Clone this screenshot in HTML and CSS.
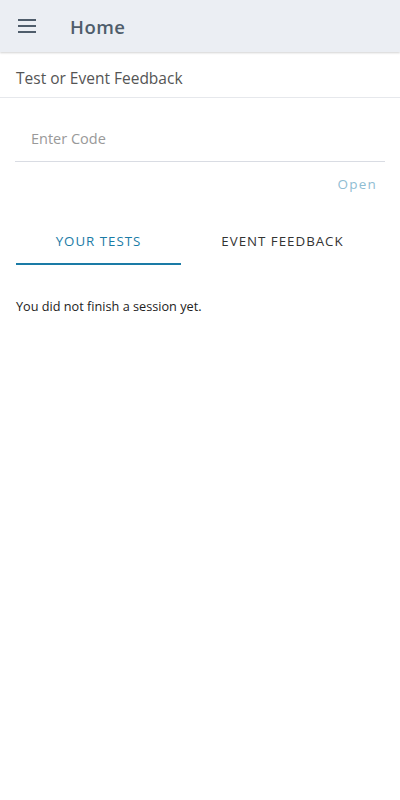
FILE: index.html
```html
<!DOCTYPE html>
<html>
<head>
  <meta charset="utf-8">
  <link rel="stylesheet" href="styles.css">
</head>
<body>
  <div class="header">
    <svg class="menu-icon" width="18" height="14" viewBox="0 0 18 14">
      <rect x="0" y="0" width="18" height="2" fill="#4f5d6b"/>
      <rect x="0" y="6" width="18" height="2" fill="#4f5d6b"/>
      <rect x="0" y="12" width="18" height="2" fill="#4f5d6b"/>
    </svg>
    <h1 class="title">Home</h1>
  </div>

  <div class="section-title">Test or Event Feedback</div>

  <div class="code-form">
    <div class="code-field">
      <input class="code-input" type="text" placeholder="Enter Code">
    </div>
    <div class="form-actions">
      <button class="open-button" disabled>Open</button>
    </div>
  </div>

  <div class="tabs">
    <div class="tab tab-active">YOUR TESTS</div>
    <div class="tab">EVENT FEEDBACK</div>
  </div>

  <div class="empty">You did not finish a session yet.</div>
</body>
</html>
```

FILE: styles.css
```css
body {
  margin: 0;
  font-family: 'Open Sans', 'Noto Sans', sans-serif;
  background: white;
  color: #222;
}

.header {
  height: 52px;
  display: flex;
  align-items: center;
  background: #ebeef3;
  box-shadow: 0 1px 2px rgba(0,0,0,0.18);
  padding-left: 18px;
  position: relative;
}

.menu-icon {
  display: block;
}

.title {
  margin: 0 0 0 34px;
  font-size: 18.5px;
  font-weight: 600;
  color: #4f5d6b;
  letter-spacing: 0.5px;
}

.section-title {
  height: 39px;
  display: flex;
  align-items: center;
  padding: 6px 16px 0;
  font-size: 15.5px;
  color: #555;
  border-bottom: 1px solid #e6e8ec;
}

.code-form {
  padding: 0 15px;
}

.code-field {
  margin-top: 20px;
  border-bottom: 1px solid #d9dce3;
}

.code-input {
  width: 100%;
  box-sizing: border-box;
  border: none;
  outline: none;
  padding: 11px 16px 13px;
  font-family: inherit;
  font-size: 14.5px;
  color: #333;
  background: transparent;
}

.code-input::placeholder {
  color: #999;
}

.form-actions {
  display: flex;
  justify-content: flex-end;
  padding: 13px 8px 0;
}

.open-button {
  border: none;
  background: none;
  padding: 0;
  font-family: inherit;
  font-size: 13.5px;
  font-weight: 500;
  letter-spacing: 1.2px;
  color: #8fbdd3;
}

.tabs {
  display: flex;
  margin: 33px 16px 0;
}

.tab {
  flex: 1;
  text-align: center;
  font-size: 13.3px;
  letter-spacing: 1px;
  color: #333;
  padding: 6px 0 13px;
  border-bottom: 2px solid transparent;
}

.tab-active {
  color: #1a7ba6;
  border-bottom-color: #1a7ba6;
  flex: 0 0 165px;
}

.empty {
  padding: 32px 16px;
  font-size: 12.7px;
  color: #222;
}
```
